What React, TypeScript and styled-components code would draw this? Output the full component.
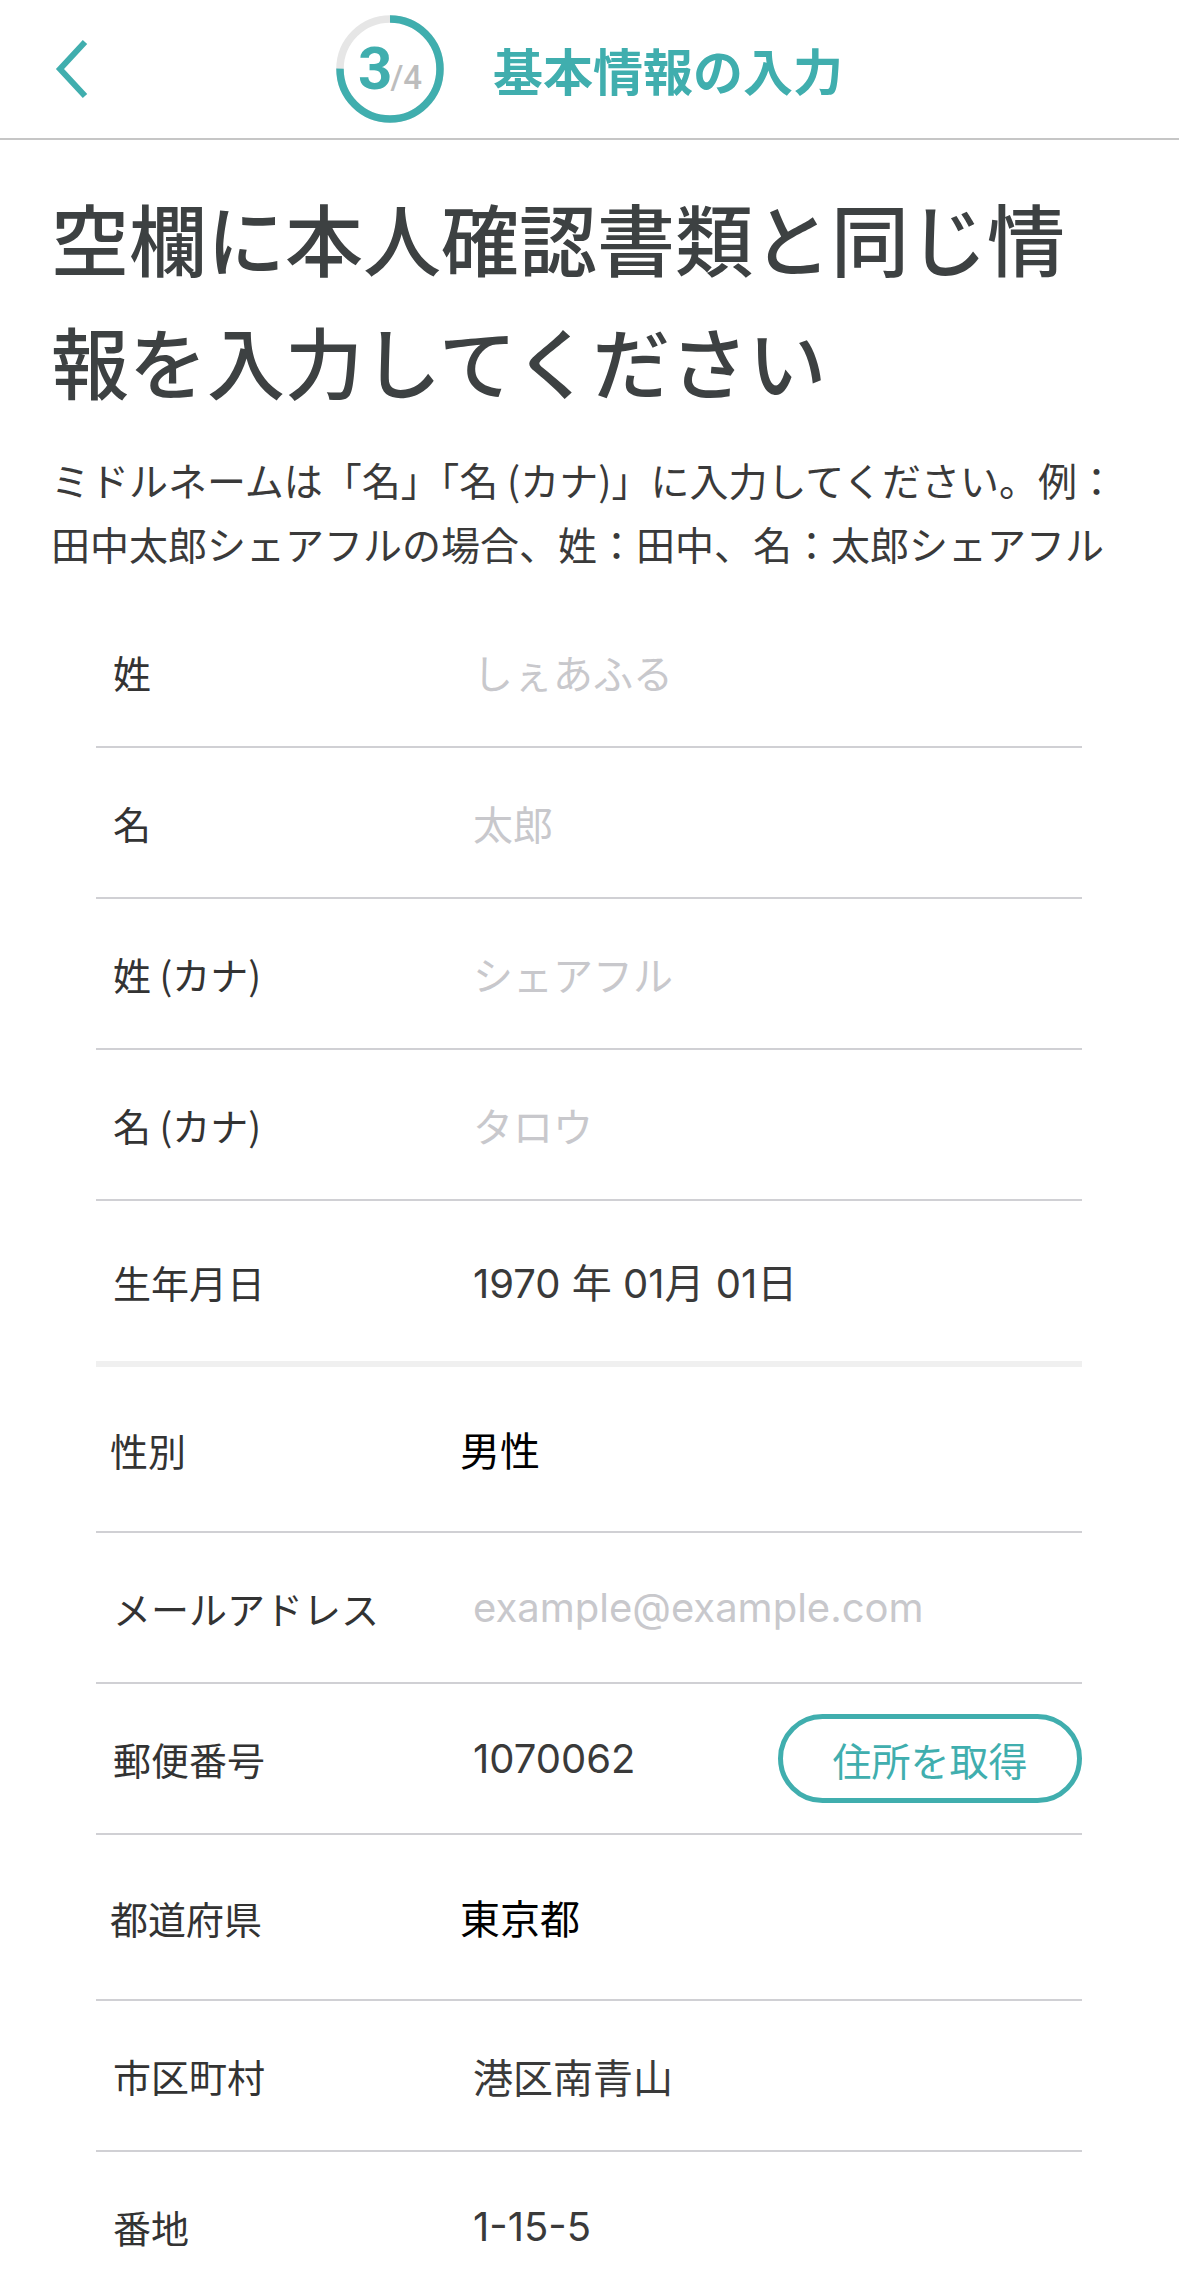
import styled, { createGlobalStyle } from 'styled-components';

const teal = '#40aeae';
const textColor = '#3d4142';
const placeholderColor = '#c8c8cc';

const GlobalStyle = createGlobalStyle`
  html, body {
    margin: 0;
    padding: 0;
    background: #fff;
  }
  body {
    font-family: "Noto Sans CJK JP", "Noto Sans", sans-serif;
    color: ${textColor};
  }
`;

type Field = {
  label: string;
  value: string;
  placeholder?: boolean;
  dark?: boolean;
  tall?: boolean;
  thick?: boolean;
  button?: string;
};

const fields: Field[] = [
  { label: '姓', value: 'しぇあふる', placeholder: true },
  { label: '名', value: '太郎', placeholder: true },
  { label: '姓 (カナ)', value: 'シェアフル', placeholder: true },
  { label: '名 (カナ)', value: 'タロウ', placeholder: true },
  { label: '生年月日', value: '1970 年 01月 01日', tall: true, thick: true },
  { label: '性別', value: '男性', dark: true, tall: true },
  { label: 'メールアドレス', value: 'example@example.com', placeholder: true },
  { label: '郵便番号', value: '1070062', button: '住所を取得' },
  { label: '都道府県', value: '東京都', dark: true, tall: true },
  { label: '市区町村', value: '港区南青山' },
  { label: '番地', value: '1-15-5' },
];

function ProgressRing() {
  const r = 50;
  const c = 2 * Math.PI * r;
  return (
    <Ring>
      <svg width="108" height="108" viewBox="0 0 108 108">
        <circle cx="54" cy="54" r={r} fill="none" stroke="#e6e6e6" strokeWidth="7.5" />
        <circle
          cx="54"
          cy="54"
          r={r}
          fill="none"
          stroke={teal}
          strokeWidth="7.5"
          strokeDasharray={`${c * 0.75} ${c}`}
          transform="rotate(-90 54 54)"
        />
      </svg>
      <RingText>
        <Current>3</Current>
        <Total>/4</Total>
      </RingText>
    </Ring>
  );
}

export default function App() {
  return (
    <Page>
      <GlobalStyle />
      <Header>
        <BackButton aria-label="戻る">
          <svg width="40" height="60" viewBox="0 0 40 60">
            <path d="M33 3 L8 30 L33 57" fill="none" stroke={teal} strokeWidth="6" />
          </svg>
        </BackButton>
        <TitleGroup>
          <ProgressRing />
          <Title>基本情報の入力</Title>
        </TitleGroup>
        <span />
      </Header>

      <Heading>空欄に本人確認書類と同じ情報を入力してください</Heading>
      <Description>
        <Line>ミドルネームは「名」「名 (カナ)」に入力してください。例：</Line>
        <Line>田中太郎シェアフルの場合、姓：田中、名：太郎シェアフル</Line>
      </Description>

      <Form>
        {fields.map((f) => (
          <Row key={f.label} $tall={f.tall} $thick={f.thick}>
            <Label $shift={f.dark}>{f.label}</Label>
            <Value $placeholder={f.placeholder} $dark={f.dark}>
              {f.value}
            </Value>
            {f.button ? <PillButton>{f.button}</PillButton> : <span />}
          </Row>
        ))}
      </Form>
    </Page>
  );
}

const Page = styled.div`
  width: 1179px;
  min-height: 2273px;
  background: #fff;
`;

const Header = styled.header`
  display: grid;
  grid-template-columns: 1fr auto 1fr;
  align-items: center;
  height: 138px;
  border-bottom: 2px solid #c6c6c6;
`;

const BackButton = styled.button`
  display: flex;
  align-items: center;
  justify-self: start;
  margin-left: 52px;
  padding: 0;
  border: none;
  background: none;
`;

const TitleGroup = styled.div`
  display: flex;
  align-items: center;
  gap: 49px;
`;

const Ring = styled.div`
  display: grid;
  width: 108px;
  height: 108px;
  & > * {
    grid-area: 1 / 1;
  }
`;

const RingText = styled.div`
  display: flex;
  align-items: baseline;
  justify-content: center;
  align-self: center;
  font-family: "Roboto", "Noto Sans", sans-serif;
  margin-top: -2px;
`;

const Current = styled.span`
  font-size: 60px;
  font-weight: 700;
  color: ${teal};
  letter-spacing: -2px;
`;

const Total = styled.span`
  font-size: 33px;
  font-weight: 500;
  color: #bdbdbd;
`;

const Title = styled.h1`
  margin: 0;
  font-size: 50px;
  font-weight: 700;
  color: ${teal};
`;

const Heading = styled.h2`
  margin: 36px 60px 0 51px;
  font-size: 78px;
  line-height: 123px;
  font-weight: 500;
  color: ${textColor};
`;

const Description = styled.p`
  margin: 25px 0 0 51px;
  font-size: 39px;
  line-height: 64px;
  color: #3a3a3a;
`;

const Line = styled.span`
  display: block;
  white-space: nowrap;
`;

const Form = styled.div`
  margin: 22px 97px 0 96px;
`;

const Row = styled.div<{ $tall?: boolean; $thick?: boolean }>`
  display: grid;
  grid-template-columns: 360px 1fr auto;
  align-items: center;
  box-sizing: border-box;
  height: ${(p) => (p.$tall ? 166 : 151)}px;
  padding-left: 17px;
  border-bottom: ${(p) => (p.$thick ? '6px solid #f0f0f0' : '2px solid #d0d0d4')};
`;

const Label = styled.div<{ $shift?: boolean }>`
  font-size: 38px;
  color: #333;
  margin-left: ${(p) => (p.$shift ? -3 : 0)}px;
`;

const Value = styled.div<{ $placeholder?: boolean; $dark?: boolean }>`
  font-family: "Inter", "Noto Sans CJK JP", sans-serif;
  font-size: 40px;
  color: ${(p) => (p.$placeholder ? placeholderColor : p.$dark ? '#000' : '#3a3a3a')};
  margin-left: ${(p) => (p.$dark ? -13 : 0)}px;
`;

const PillButton = styled.button`
  box-sizing: border-box;
  width: 304px;
  height: 89px;
  border: 5px solid ${teal};
  border-radius: 45px;
  background: #fff;
  color: ${teal};
  font-family: "Noto Sans CJK JP", sans-serif;
  font-size: 39px;
  padding: 0;
`;
